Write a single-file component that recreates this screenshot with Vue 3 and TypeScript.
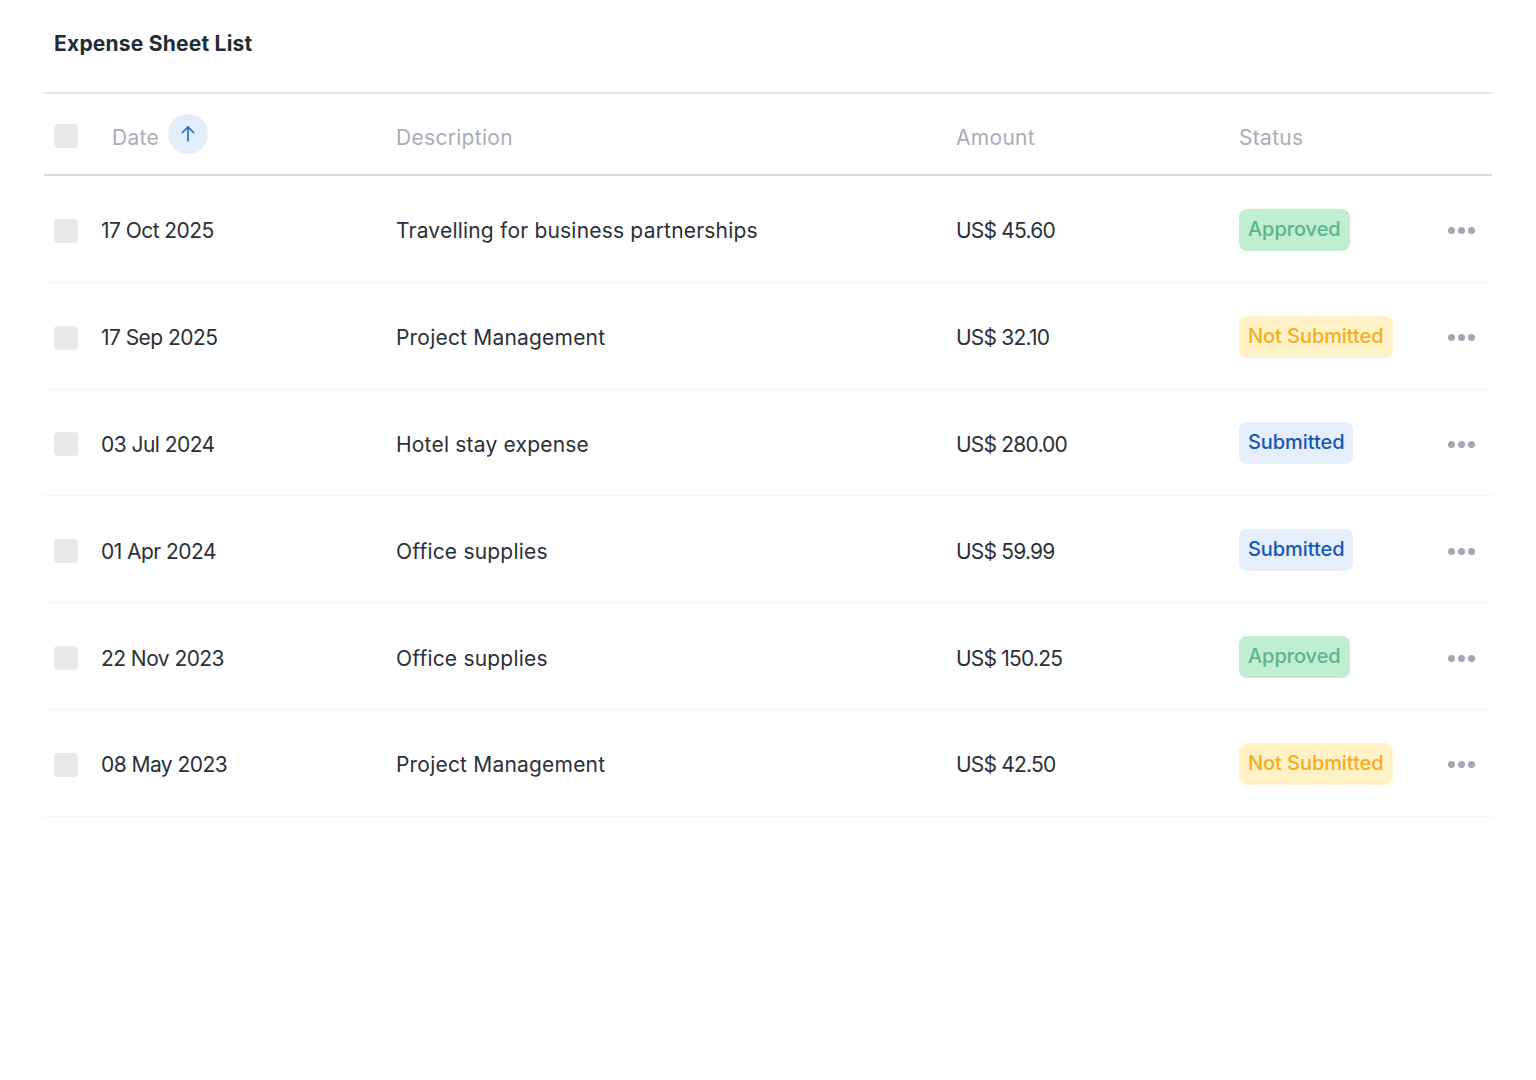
<script setup lang="ts">
type Status = "Approved" | "Not Submitted" | "Submitted";

interface Expense {
  date: string;
  description: string;
  amount: string;
  status: Status;
}

const expenses: Expense[] = [
  { date: "17 Oct 2025", description: "Travelling for business partnerships", amount: "US$ 45.60", status: "Approved" },
  { date: "17 Sep 2025", description: "Project Management", amount: "US$ 32.10", status: "Not Submitted" },
  { date: "03 Jul 2024", description: "Hotel stay expense", amount: "US$ 280.00", status: "Submitted" },
  { date: "01 Apr 2024", description: "Office supplies", amount: "US$ 59.99", status: "Submitted" },
  { date: "22 Nov 2023", description: "Office supplies", amount: "US$ 150.25", status: "Approved" },
  { date: "08 May 2023", description: "Project Management", amount: "US$ 42.50", status: "Not Submitted" },
];

const statusClass: Record<Status, string> = {
  Approved: "is-approved",
  "Not Submitted": "is-pending",
  Submitted: "is-submitted",
};
</script>

<template>
  <main class="sheet">
    <h1 class="title">Expense Sheet List</h1>

    <div class="row head">
      <span class="checkbox"></span>
      <span class="date-head">
        Date
        <span class="sort">
          <svg width="16" height="18" viewBox="0 0 16 18" fill="none" stroke="#1e6fc8" stroke-width="1.7">
            <path d="M8 16.5V2M2 8l6-6 6 6" />
          </svg>
        </span>
      </span>
      <span>Description</span>
      <span>Amount</span>
      <span>Status</span>
    </div>

    <div v-for="item in expenses" :key="item.date" class="row body">
      <span class="checkbox"></span>
      <span class="date">{{ item.date }}</span>
      <span class="description">{{ item.description }}</span>
      <span class="amount">{{ item.amount }}</span>
      <span><span class="badge" :class="statusClass[item.status]">{{ item.status }}</span></span>
      <span class="dots"><i></i><i></i><i></i></span>
    </div>
  </main>
</template>

<style scoped>
.sheet {
  padding: 0 44px;
  font-family: "Inter", "Noto Sans", sans-serif;
  color: #2b3038;
}

.title {
  margin: 0;
  height: 92px;
  padding: 32px 0 0 10px;
  box-sizing: border-box;
  font-size: 21px;
  line-height: 24px;
  font-weight: 700;
  letter-spacing: 0.22px;
  color: #1f2d36;
}

.row {
  display: grid;
  grid-template-columns: 47px 295px 560px 283px 208px 1fr;
  align-items: center;
  padding-left: 10px;
}

.head {
  height: 84px;
  padding-top: 6px;
  border-top: 2px solid #e4e5e7;
  border-bottom: 2px solid #dcdde0;
  box-sizing: border-box;
  font-size: 21px;
  letter-spacing: 0.3px;
  color: #a9adb6;
}

.head .checkbox {
  margin-top: -2px;
}

.date-head {
  display: flex;
  align-items: center;
  gap: 9px;
  padding-left: 11px;
}

.sort {
  display: flex;
  align-items: center;
  justify-content: center;
  width: 40px;
  height: 40px;
  margin-top: -6px;
  border-radius: 50%;
  background: #e4eefa;
}

.body {
  height: 106.8px;
  padding-top: 2px;
  border-bottom: 1px solid #f3f4f5;
  box-sizing: border-box;
  font-size: 21px;
}

.body .checkbox {
  margin-top: 2px;
}

.date,
.description,
.amount {
  padding-top: 2px;
}

.date {
  letter-spacing: -0.55px;
}

.description {
  letter-spacing: 0.2px;
}

.amount {
  letter-spacing: -0.8px;
}

.checkbox {
  width: 24px;
  height: 24px;
  border-radius: 4px;
  background: #e9e9ea;
}

.badge {
  display: inline-block;
  height: 42px;
  padding: 0 9px;
  border-radius: 8px;
  font-size: 20px;
  font-weight: 500;
  line-height: 41px;
  letter-spacing: -0.07px;
}

.is-approved {
  background: #bfeed2;
  color: #5db586;
}

.is-pending {
  background: #fff2c6;
  color: #f6ad1c;
}

.is-submitted {
  background: #e6edfb;
  color: #1458b8;
}

.dots {
  display: flex;
  gap: 3px;
  padding: 2px 0 0 1px;
}

.dots i {
  width: 7px;
  height: 7px;
  border-radius: 50%;
  background: #a5a6b2;
}
</style>

<style>
html,
body {
  background: #fff;
}
</style>
